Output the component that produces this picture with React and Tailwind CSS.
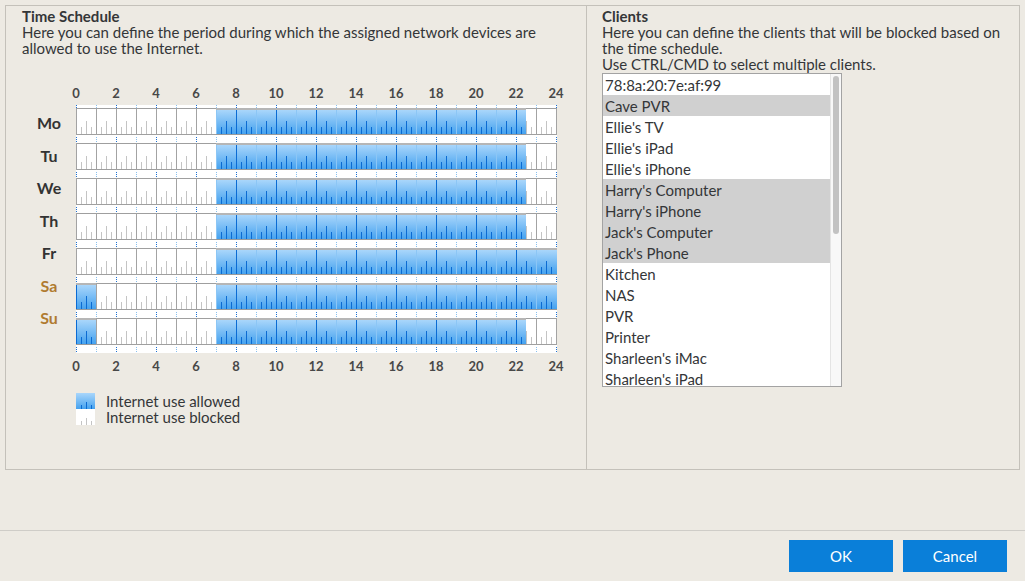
import React from 'react';

const DAYS = [
  { name: 'Mo', on: [[7, 22.5]], weekend: false },
  { name: 'Tu', on: [[7, 22.5]], weekend: false },
  { name: 'We', on: [[7, 22.5]], weekend: false },
  { name: 'Th', on: [[7, 22.5]], weekend: false },
  { name: 'Fr', on: [[7, 24]], weekend: false },
  { name: 'Sa', on: [[0, 1], [7, 24]], weekend: true },
  { name: 'Su', on: [[0, 1], [7, 22.5]], weekend: true },
];

const CLIENTS = [
  { name: '78:8a:20:7e:af:99' },
  { name: 'Cave PVR', sel: true },
  { name: "Ellie's TV" },
  { name: "Ellie's iPad" },
  { name: "Ellie's iPhone" },
  { name: "Harry's Computer", sel: true },
  { name: "Harry's iPhone", sel: true },
  { name: "Jack's Computer", sel: true },
  { name: "Jack's Phone", sel: true },
  { name: 'Kitchen' },
  { name: 'NAS' },
  { name: 'PVR' },
  { name: 'Printer' },
  { name: "Sharleen's iMac" },
  { name: "Sharleen's iPad" },
];

const HOURS = Array.from({ length: 25 }, (_, i) => i);
const LABELS = Array.from({ length: 13 }, (_, i) => i * 2);

const blocked = (on) => {
  const out = [];
  let t = 0;
  on.forEach(([a, b]) => {
    if (a > t) out.push([t, a]);
    t = b;
  });
  if (t < 24) out.push([t, 24]);
  return out;
};

const inOn = (on, t) => on.some(([a, b]) => t >= a && t < b);

const DayRow = ({ day, y }) => {
  const off = blocked(day.on);
  const ticks = [];
  for (let h = 0; h < 24; h++) {
    [0.25, 0.5, 0.75].forEach(q => {
      const t = h + q;
      const blue = inOn(day.on, t);
      const tall = q === 0.5;
      ticks.push(
        <line key={t} x1={t * 20 + 0.5} x2={t * 20 + 0.5} y1={y + (tall ? 13 : 19)} y2={y + 26}
          stroke={blue ? '#0b6bd2' : '#c4c4c4'} strokeWidth="1" />
      );
    });
  }
  return (
    <g>
      {off.map(([a, b]) => (
        <g key={a}>
          <line x1={a * 20} x2={b * 20 + 1} y1={y + 0.5} y2={y + 0.5} stroke="#9f9f9f" />
          <line x1={a * 20} x2={b * 20 + 1} y1={y + 26.5} y2={y + 26.5} stroke="#9f9f9f" />
          {HOURS.filter(h => h >= a && h <= b).map(h => (
            <line key={h} x1={h * 20 + 0.5} x2={h * 20 + 0.5} y1={y} y2={y + 27} stroke="#a3a3a3" />
          ))}
        </g>
      ))}
      {day.on.map(([a, b]) => (
        <g key={a}>
          <rect x={a * 20} y={y} width={(b - a) * 20 + (b === 24 ? 1 : 0)} height="27" fill="url(#allowed)" />
          {HOURS.filter(h => h >= a && h < b).map(h => (
            <line key={h} x1={h * 20 + 0.5} x2={h * 20 + 0.5} y1={y + 2} y2={y + 26}
              stroke={h % 2 === 0 ? '#0a6bd4' : '#8cc6f5'} />
          ))}
        </g>
      ))}
      {ticks}
    </g>
  );
};

const ScheduleChart = () => (
  <svg width="481" height="248" className="block bg-white">
    <defs>
      <linearGradient id="allowed" x1="0" y1="0" x2="0" y2="1">
        <stop offset="0" stopColor="#b6b6b6" />
        <stop offset="0.075" stopColor="#b6b6b6" />
        <stop offset="0.076" stopColor="#a9d6fb" />
        <stop offset="0.96" stopColor="#45a2ef" />
        <stop offset="0.961" stopColor="#9a9a9a" />
        <stop offset="1" stopColor="#9a9a9a" />
      </linearGradient>
    </defs>
    {HOURS.map(h => (
      <g key={h} stroke={h % 2 === 0 ? '#1c6fd2' : '#8ac0ee'} strokeDasharray="1 1">
        <line x1={h * 20 + 0.5} x2={h * 20 + 0.5} y1="0" y2="3" />
        {DAYS.map((d, i) => (
          <line key={d.name} x1={h * 20 + 0.5} x2={h * 20 + 0.5} y1={3 + i * 35 + 29} y2={3 + i * 35 + 34} />
        ))}
      </g>
    ))}
    {DAYS.map((d, i) => <DayRow key={d.name} day={d} y={3 + i * 35} />)}
  </svg>
);

const HourLabels = () => (
  <div className="flex ml-[-20px] h-[16px] leading-[16px] text-[13px] font-bold text-[#484848]">
    {LABELS.map(h => <div key={h} className="w-[40px] text-center">{h}</div>)}
  </div>
);

const Swatch = ({ blue }) => (
  <svg width="19" height="16" className="block">
    <defs>
      <linearGradient id="legendBlue" x1="0" y1="0" x2="0" y2="1">
        <stop offset="0" stopColor="#a9d6fb" />
        <stop offset="1" stopColor="#45a2ef" />
      </linearGradient>
    </defs>
    <rect width="19" height="16" fill={blue ? 'url(#legendBlue)' : '#ffffff'} />
    {[5, 10, 15].map(x => (
      <line key={x} x1={x + 0.5} x2={x + 0.5} y1={x === 10 ? 9 : 12} y2="16" stroke={blue ? '#0b6bd2' : '#c4c4c4'} />
    ))}
  </svg>
);

export default function App() {
  return (
    <div className="w-[1025px] h-[581px] bg-[#edeae3] text-[#343638] text-[15px] leading-[16px] font-['Lato',sans-serif] flex flex-col">
      <div className="mx-[5px] mt-[5px] h-[465px] border border-[#c4c1ba] flex">
        <div className="w-[581px] border-r border-[#c4c1ba] pl-[16px] pt-[2px]">
          <div className="font-bold">Time Schedule</div>
          <div>Here you can define the period during which the assigned network devices are<br />allowed to use the Internet.</div>

          <div className="flex mt-[29px]">
            <div className="w-[54px] pt-[22px] flex flex-col">
              {DAYS.map(d => (
                <div key={d.name} className={`h-[32.5px] flex items-center justify-center text-[16px] font-bold ${d.weekend ? 'text-[#b07b30]' : 'text-[#333]'}`}>
                  {d.name}
                </div>
              ))}
            </div>
            <div className="flex flex-col">
              <HourLabels />
              <div className="mt-[4px]"><ScheduleChart /></div>
              <div className="mt-[5px]"><HourLabels /></div>
            </div>
          </div>

          <div className="ml-[54px] mt-[19px] flex flex-col">
            <div className="flex items-center gap-[11px] h-[16px]"><Swatch blue /><span>Internet use allowed</span></div>
            <div className="flex items-center gap-[11px] h-[16px]"><Swatch /><span>Internet use blocked</span></div>
          </div>
        </div>

        <div className="flex-1 pl-[15px] pt-[2px]">
          <div className="font-bold">Clients</div>
          <div>Here you can define the clients that will be blocked based on<br />the time schedule.<br />Use CTRL/CMD to select multiple clients.</div>
          <div className="mt-[1px] w-[240px] h-[314px] border border-[#a3a3a3] bg-white flex overflow-hidden">
            <div className="flex-1 flex flex-col overflow-hidden">
              {CLIENTS.map(c => (
                <div key={c.name} className={`h-[21px] shrink-0 px-[2px] flex items-center ${c.sel ? 'bg-[#d0d0d0]' : ''}`}>
                  {c.name}
                </div>
              ))}
            </div>
            <div className="w-[11px] bg-[#f8f8f8] border-l border-[#e4e4e4] pt-[2px] flex justify-center">
              <div className="w-[6px] h-[158px] rounded-full bg-[#c2c2c2]" />
            </div>
          </div>
        </div>
      </div>

      <div className="mt-auto h-[51px] border-t border-[#cfcdc8] flex justify-end items-start gap-[10px] pt-[9px] pr-[18px]">
        <button className="w-[104px] h-[32px] bg-[#0a7fd9] text-white text-[15px]">OK</button>
        <button className="w-[104px] h-[32px] bg-[#0a7fd9] text-white text-[15px]">Cancel</button>
      </div>
    </div>
  );
}
